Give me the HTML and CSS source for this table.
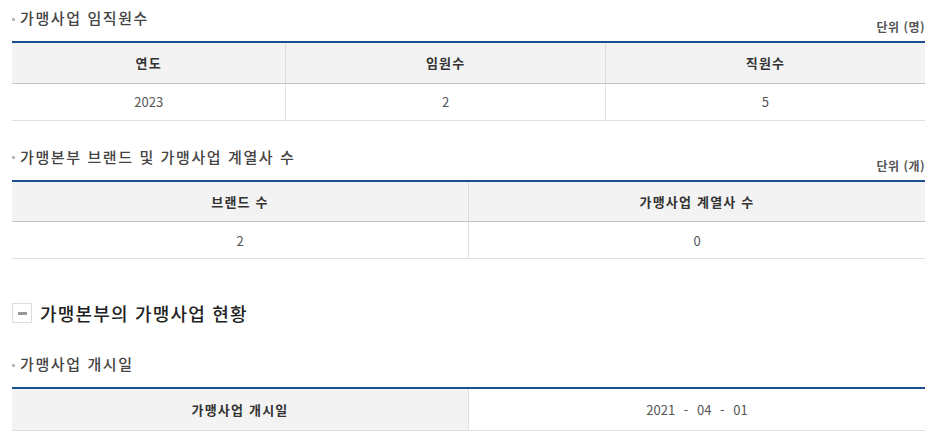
FILE: index.html
```html
<!DOCTYPE html>
<html lang="ko">
<head>
<meta charset="utf-8">
<link rel="stylesheet" href="styles.css">
</head>
<body>
<div class="page">
  <section class="sec sec-first">
    <div class="sec-head">
      <h3 class="sec-title">가맹사업 임직원수</h3>
      <span class="unit">단위 (명)</span>
    </div>
    <table class="tbl">
      <colgroup><col class="c30"><col class="c35"><col class="c35"></colgroup>
      <thead><tr><th>연도</th><th>임원수</th><th>직원수</th></tr></thead>
      <tbody><tr><td>2023</td><td>2</td><td>5</td></tr></tbody>
    </table>
  </section>

  <section class="sec">
    <div class="sec-head">
      <h3 class="sec-title">가맹본부 브랜드 및 가맹사업 계열사 수</h3>
      <span class="unit">단위 (개)</span>
    </div>
    <table class="tbl">
      <colgroup><col class="c50"><col class="c50"></colgroup>
      <thead><tr><th>브랜드 수</th><th>가맹사업 계열사 수</th></tr></thead>
      <tbody><tr><td>2</td><td>0</td></tr></tbody>
    </table>
  </section>

  <h2 class="big-head"><span class="toggle"><span class="bar"></span></span>가맹본부의 가맹사업 현황</h2>

  <section class="sec sec-after">
    <div class="sec-head">
      <h3 class="sec-title">가맹사업 개시일</h3>
    </div>
    <table class="tbl tbl-row">
      <colgroup><col class="c50"><col class="c50"></colgroup>
      <tbody><tr><th>가맹사업 개시일</th><td class="date">2021 - 04 - 01</td></tr></tbody>
    </table>
  </section>
</div>
</body>
</html>
```
FILE: styles.css
```css
* { box-sizing: border-box; }
html, body { margin: 0; padding: 0; background: #fff; }
body {
  font-family: "Noto Sans CJK KR", "Noto Sans", sans-serif;
  color: #333;
}
.page {
  width: 913px;
  margin-left: 12px;
}
.sec { margin-top: 26px; }
.sec-first { margin-top: 8px; }
.sec-after { margin-top: 31px; }
.sec-head {
  display: flex;
  justify-content: space-between;
  align-items: flex-end;
  margin-bottom: 5px;
}
.sec-title {
  margin: 0;
  padding-bottom: 8px;
  font-size: 15px;
  line-height: 20px;
  font-weight: 500;
  color: #444;
  letter-spacing: 1.6px;
  display: flex;
  align-items: center;
}
.sec-title::before {
  content: "";
  width: 3px;
  height: 3px;
  background: #bbb;
  margin-right: 5px;
  margin-top: 2px;
}
.unit {
  font-size: 12px;
  line-height: 16px;
  font-weight: 700;
  color: #555;
  letter-spacing: 0.5px;
  padding-bottom: 1px;
}
.tbl {
  width: 100%;
  border-collapse: collapse;
  table-layout: fixed;
  border-top: 2px solid #1b4f91;
}
.c30 { width: 30%; }
.c35 { width: 35%; }
.c50 { width: 50%; }
.tbl th {
  height: 41px;
  background: #f3f3f3;
  font-size: 13px;
  font-weight: 700;
  color: #333;
  letter-spacing: 1.2px;
  text-align: center;
  padding: 0;
  border-bottom: 1px solid #c4c4c4;
  border-left: 1px solid #ddd;
}
.tbl td {
  height: 37px;
  font-size: 13px;
  color: #555;
  text-align: center;
  padding: 0;
  border-bottom: 1px solid #e0e0e0;
  border-left: 1px solid #e0e0e0;
}
.tbl th:first-child, .tbl td:first-child { border-left: none; }
.tbl-row th { height: 42px; border-bottom: 1px solid #e0e0e0; }
.tbl-row td { height: 42px; }
.date { font-size: 14px; word-spacing: 5px; }
.big-head {
  margin: 44px 0 0 0;
  display: flex;
  align-items: center;
  font-size: 18px;
  line-height: 20px;
  font-weight: 500;
  color: #222;
  letter-spacing: 1.2px;
}
.toggle {
  width: 20px;
  height: 20px;
  border: 1px solid #ddd;
  margin-right: 8px;
  display: flex;
  align-items: center;
  justify-content: center;
}
.toggle .bar {
  width: 9px;
  height: 3px;
  background: #999;
}
```
